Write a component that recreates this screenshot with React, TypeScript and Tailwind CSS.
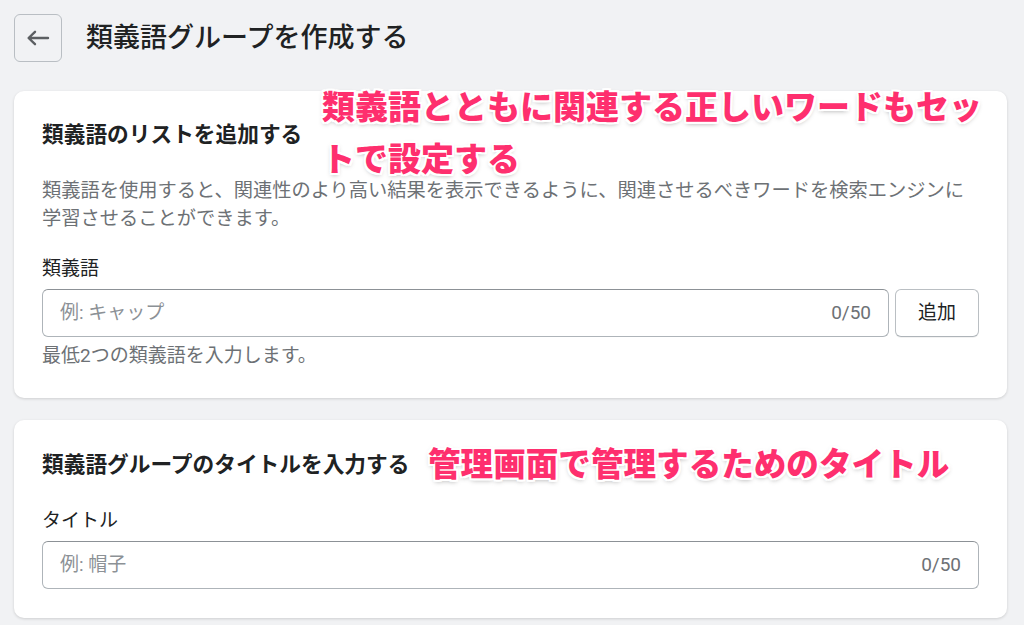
import React from "react";

const annot =
  "absolute font-black text-[#fe2f6e] whitespace-nowrap [text-shadow:2px_0_0_#fff,-2px_0_0_#fff,0_2px_0_#fff,0_-2px_0_#fff,2px_2px_0_#fff,-2px_-2px_0_#fff,2px_-2px_0_#fff,-2px_2px_0_#fff,0_2px_5px_rgba(0,0,0,0.35)]";

export default function App() {
  return (
    <div className="min-h-[625px] w-full bg-[#f1f2f4] px-[14px] pt-[14px] pb-4 font-['Roboto','Noto_Sans_CJK_JP',sans-serif] text-[#202223]">
      {/* Header */}
      <div className="flex items-center gap-[24px]">
        <button className="flex h-[48px] w-[48px] items-center justify-center rounded-[6px] border border-[#b9bec3] bg-[#f1f2f4]">
          <svg width="24" height="16" viewBox="0 0 24 16" fill="none">
            <path
              d="M22 8H3M9 1.8L2.6 8L9 14.2"
              stroke="#5c5f62"
              strokeWidth="2.4"
              strokeLinecap="round"
              strokeLinejoin="round"
            />
          </svg>
        </button>
        <h1 className="text-[27px] font-medium leading-[36px] text-[#202223]">
          類義語グループを作成する
        </h1>
      </div>

      {/* Card 1 */}
      <div className="relative mt-[29px] w-[993px] rounded-[10px] bg-white px-[28px] pt-[28px] pb-[28px] shadow-[0_1px_3px_rgba(0,0,0,0.15)]">
        <h2 className="text-[21.7px] font-semibold leading-[32px]">類義語のリストを追加する</h2>
        <p className="mt-[26px] text-[19.25px] leading-[28px] text-[#6d7175]">
          類義語を使用すると、関連性のより高い結果を表示できるように、関連させるべきワードを検索エンジンに
          <br />
          学習させることができます。
        </p>
        <div className="mt-[22px] text-[19px] leading-[28px]">類義語</div>
        <div className="mt-[6px] flex gap-[6px]">
          <div className="flex h-[48px] flex-1 items-center justify-between rounded-[6px] border border-[#aeb4b9] border-t-[#8c9196] px-[17px] text-[19px]">
            <span className="text-[#8c9196]">例: キャップ</span>
            <span className="text-[#6d7175]">0/50</span>
          </div>
          <button className="h-[48px] w-[84px] rounded-[6px] border border-[#babfc3] border-b-[#aeb4b9] bg-white text-[19px] text-[#202223] shadow-[0_1px_0_rgba(0,0,0,0.05)]">
            追加
          </button>
        </div>
        <div className="mt-[5px] text-[19px] leading-[28px] text-[#6d7175]">
          最低2つの類義語を入力します。
        </div>
        <div className={annot + " left-[308px] top-[-9px] text-[33px] leading-[52px]"}>
          類義語とともに関連する正しいワードもセッ
          <br />
          トで設定する
        </div>
      </div>

      {/* Card 2 */}
      <div className="relative mt-[22px] w-[993px] rounded-[10px] bg-white px-[28px] pt-[29px] pb-[29px] shadow-[0_1px_3px_rgba(0,0,0,0.15)]">
        <h2 className="text-[21.7px] font-semibold leading-[32px]">類義語グループのタイトルを入力する</h2>
        <div className="mt-[26px] text-[19px] leading-[28px]">タイトル</div>
        <div className="mt-[6px] flex h-[48px] items-center justify-between rounded-[6px] border border-[#aeb4b9] border-t-[#8c9196] px-[17px] text-[19px]">
          <span className="text-[#8c9196]">例: 帽子</span>
          <span className="text-[#6d7175]">0/50</span>
        </div>
        <div className={annot + " left-[414px] top-[19px] text-[32.6px] leading-[52px]"}>
          管理画面で管理するためのタイトル
        </div>
      </div>
    </div>
  );
}
